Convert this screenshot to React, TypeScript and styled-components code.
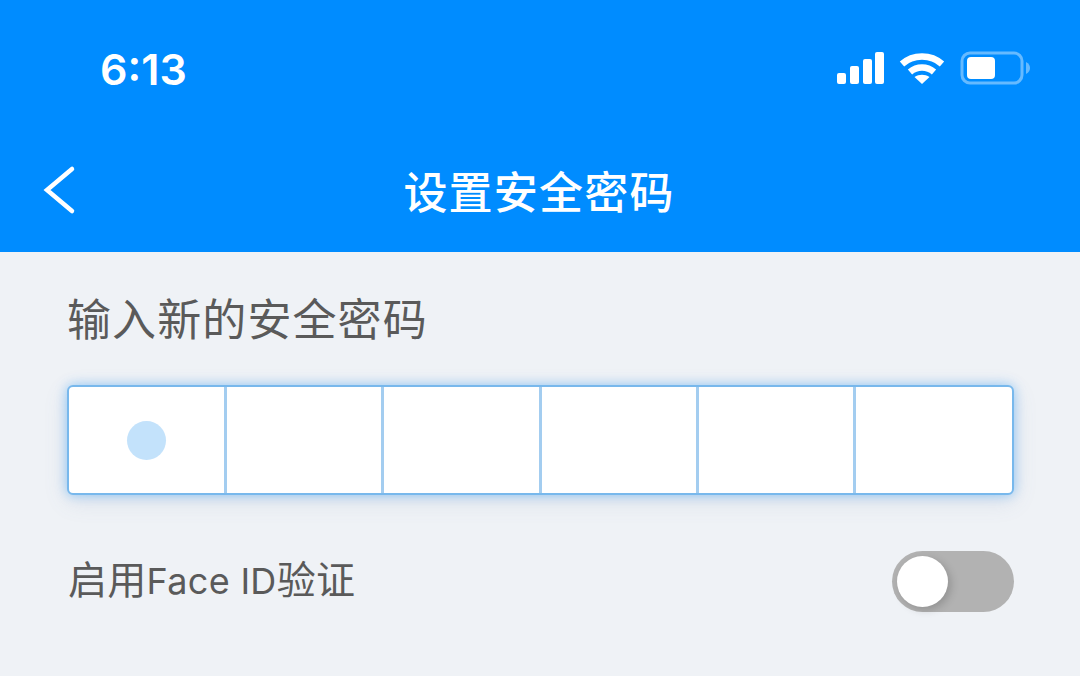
import React from 'react';
import styled, { createGlobalStyle } from 'styled-components';

const GlobalStyle = createGlobalStyle`
  html, body {
    margin: 0;
    padding: 0;
    background: #eff1f6;
    overflow: hidden;
  }
`;

const Page = styled.div`
  width: 1080px;
  height: 676px;
  background: #eff2f6;
  font-family: 'Noto Sans CJK SC', 'Noto Sans', sans-serif;
  overflow: hidden;
`;

const Header = styled.header`
  height: 252px;
  background: #008cff;
  color: #fff;
  box-sizing: border-box;
  padding: 40px 50px 0 43px;
`;

const StatusBar = styled.div`
  display: flex;
  align-items: center;
  justify-content: space-between;
  height: 58px;
  padding-left: 57px;
`;

const Time = styled.div`
  font-family: Inter, sans-serif;
  font-size: 43px;
  font-weight: 600;
  line-height: 58px;
`;

const StatusIcons = styled.div`
  display: flex;
  align-items: center;
  gap: 15px;
  margin-top: -2px;
`;

const NavBar = styled.div`
  display: grid;
  grid-template-columns: 100px 1fr 100px;
  margin: 62px -7px 0 0;
  align-items: center;
  height: 60px;
`;

const Title = styled.h1`
  margin: 0;
  text-align: center;
  font-size: 44px;
  font-weight: 500;
  line-height: 60px;
  letter-spacing: 1.2px;
  transform: translateX(-1px);
`;

const Content = styled.main`
  padding: 37px 66px 0 67px;
`;

const FieldLabel = styled.div`
  font-size: 44px;
  line-height: 56px;
  color: #5a5a5a;
  letter-spacing: 1.1px;
`;

const PinBox = styled.div`
  display: grid;
  grid-template-columns: repeat(6, 1fr);
  height: 110px;
  box-sizing: border-box;
  margin-top: 40px;
  background: #fff;
  border: 2px solid #78b8ec;
  border-radius: 6px;
  box-shadow: 0 0 12px rgba(0, 140, 255, 0.38), 0 6px 24px rgba(90, 120, 160, 0.14);
`;

const PinCell = styled.div`
  display: flex;
  align-items: center;
  justify-content: center;
  margin-right: -1px;
  border-right: 3px solid #a3cdf0;

  &:last-child {
    margin-right: 0;
    border-right: none;
  }
`;

const PinDot = styled.span`
  display: block;
  width: 39px;
  height: 39px;
  border-radius: 50%;
  background: #c3e2fb;
`;

const SettingRow = styled.div`
  display: flex;
  align-items: center;
  justify-content: space-between;
  margin-top: 56px;
  height: 61px;
`;

const SettingLabel = styled.span`
  font-size: 39px;
  line-height: 56px;
  color: #5a5a5a;
  margin-left: 1px;
  margin-top: -5px;
  letter-spacing: 0.3px;
`;

const LatinText = styled.span`
  font-family: Inter, sans-serif;
  font-size: 36px;
`;

const Toggle = styled.div`
  display: flex;
  align-items: center;
  box-sizing: border-box;
  width: 122px;
  height: 61px;
  padding-left: 5px;
  border-radius: 31px;
  background: #b2b2b2;
`;

const Knob = styled.span`
  display: block;
  width: 51px;
  height: 51px;
  border-radius: 50%;
  background: #fff;
  box-shadow: 3px 3px 8px rgba(0, 0, 0, 0.18);
`;

const SignalIcon = () => (
  <svg width="48" height="32" viewBox="0 0 48 32" fill="#fff">
    <rect x="1" y="21" width="9" height="11" rx="2" />
    <rect x="14" y="14" width="9" height="18" rx="2" />
    <rect x="27" y="7" width="9" height="25" rx="2" />
    <rect x="39" y="0" width="9" height="32" rx="2" />
  </svg>
);

const WifiIcon = () => (
  <svg width="46" height="34" viewBox="0 0 46 34" fill="none" stroke="#fff" strokeWidth="6.5">
    <path d="M3 13 C14 3 32 3 43 13" />
    <path d="M11 21 C18 15 28 15 35 21" />
    <path d="M23 33 L15.5 26 C20 23 26 23 30.5 26 Z" fill="#fff" stroke="none" />
  </svg>
);

const BatteryIcon = () => (
  <svg width="70" height="34" viewBox="0 0 70 34" fill="none">
    <rect x="2" y="2" width="60" height="30" rx="8" stroke="#66baff" strokeWidth="3" />
    <rect x="7" y="6" width="28" height="22" rx="4" fill="#fff" />
    <path d="M66 11 C69 12.5 70 15 70 17 C70 19 69 21.5 66 23 Z" fill="#66baff" />
  </svg>
);

const BackIcon = () => (
  <svg width="34" height="50" viewBox="0 0 34 50" fill="none" stroke="#fff" strokeWidth="4.5" strokeLinecap="round">
    <path d="M29 4 L4 25 L29 46" />
  </svg>
);

export default function App() {
  return (
    <Page>
      <GlobalStyle />
      <Header>
        <StatusBar>
          <Time>6:13</Time>
          <StatusIcons>
            <SignalIcon />
            <WifiIcon />
            <BatteryIcon />
          </StatusIcons>
        </StatusBar>
        <NavBar>
          <BackIcon />
          <Title>设置安全密码</Title>
        </NavBar>
      </Header>
      <Content>
        <FieldLabel>输入新的安全密码</FieldLabel>
        <PinBox>
          <PinCell>
            <PinDot />
          </PinCell>
          <PinCell />
          <PinCell />
          <PinCell />
          <PinCell />
          <PinCell />
        </PinBox>
        <SettingRow>
          <SettingLabel>
            启用<LatinText>Face ID</LatinText>验证
          </SettingLabel>
          <Toggle>
            <Knob />
          </Toggle>
        </SettingRow>
      </Content>
    </Page>
  );
}
